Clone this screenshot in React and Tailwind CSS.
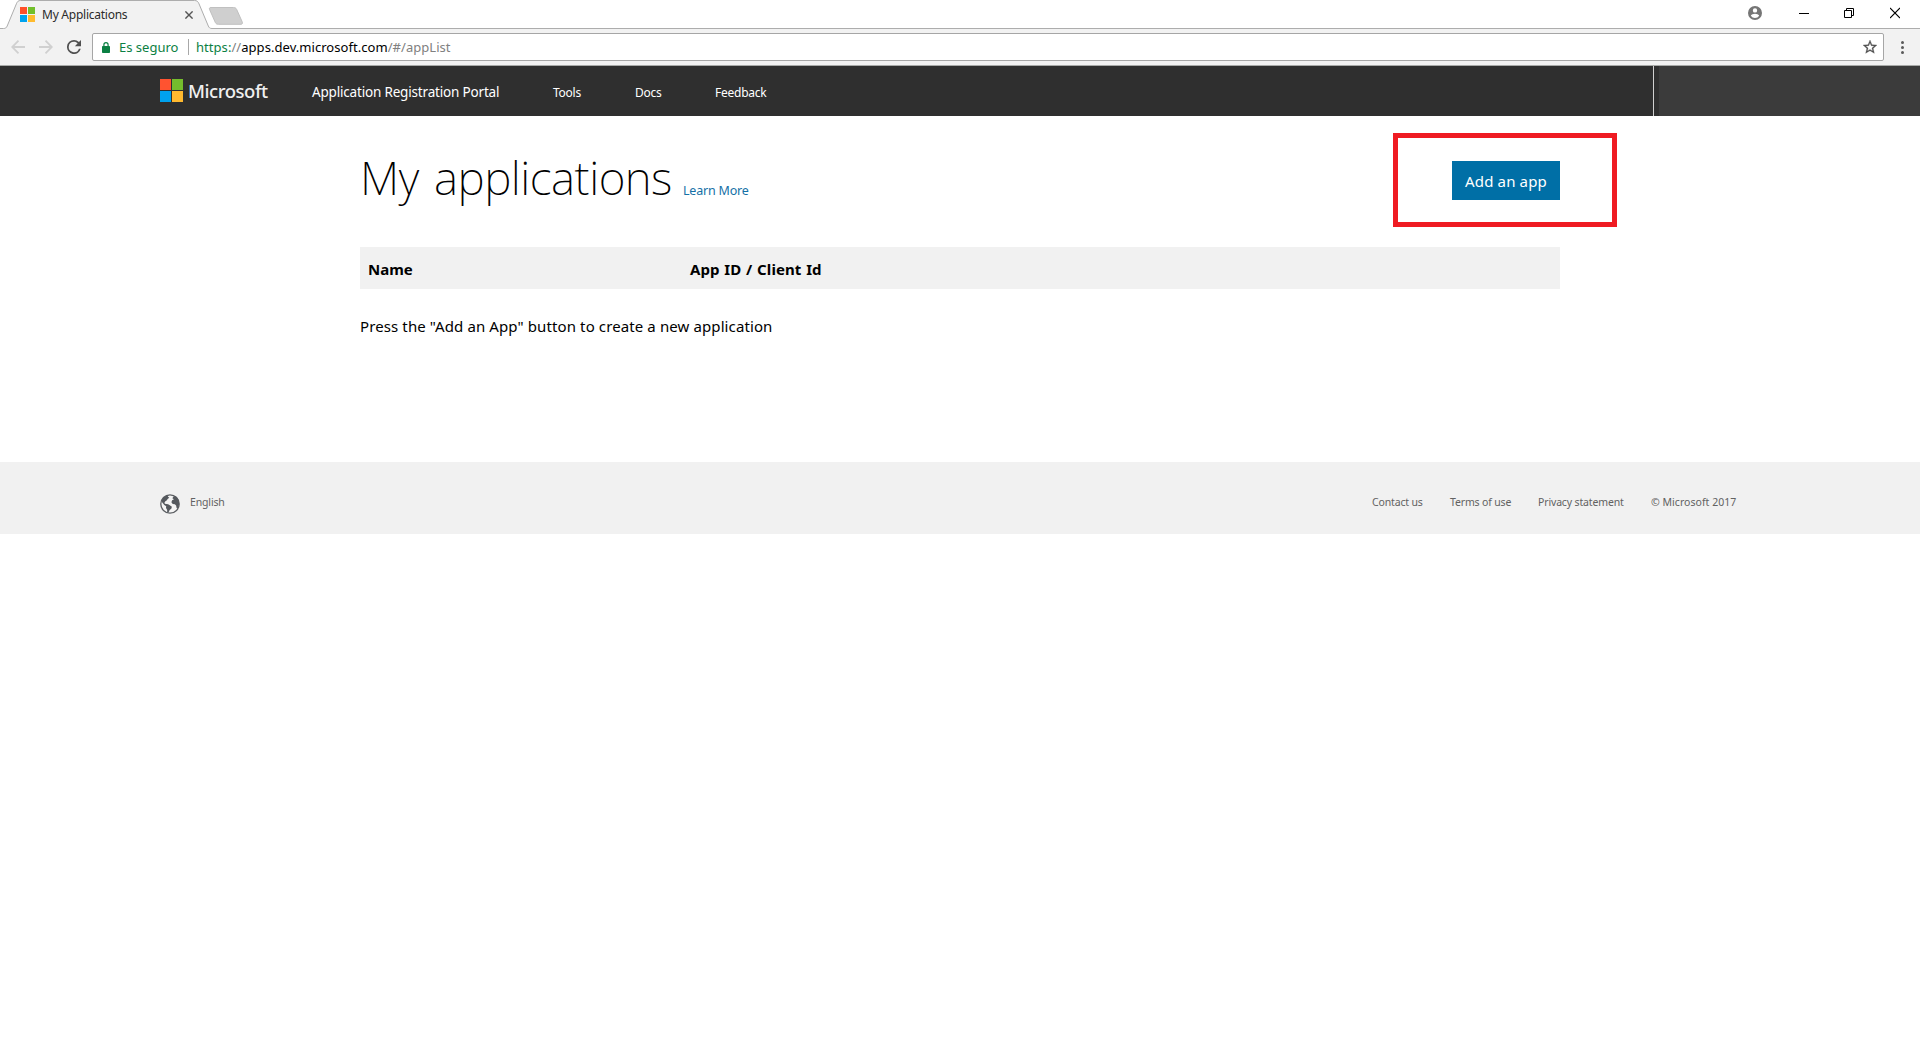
import React from 'react';

function TabFavicon() {
  return (
    <div className="grid h-[15px] w-[15px] shrink-0 grid-cols-[7px_7px] grid-rows-[7px_7px] gap-px">
      <span className="bg-[#ff5029]" />
      <span className="bg-[#72bf2b]" />
      <span className="bg-[#00a3ee]" />
      <span className="bg-[#ffbb2e]" />
    </div>
  );
}

function MicrosoftMark() {
  return (
    <div className="-mt-px mb-px grid h-[23px] w-[23px] shrink-0 grid-cols-[11px_11px] grid-rows-[11px_11px] gap-px">
      <span className="bg-[#ff5330]" />
      <span className="bg-[#75bd2d]" />
      <span className="bg-[#00a2ee]" />
      <span className="bg-[#ffb92f]" />
    </div>
  );
}

function TabStrip() {
  return (
    <div className="relative flex h-[29px] bg-white">
      <svg className="absolute inset-0" width="260" height="29" viewBox="0 0 260 29" fill="none">
        <path d="M0 29V28.5H3.5C5.5 28.5 6.4 27.8 7.2 26L16.4 3.8C17.4 1.4 18.4.5 20.5.5H194.5C196.8.5 198 1.4 199 3.8L208.3 26C209.1 27.8 210 28.5 212 28.5H260V29Z" fill="#f2f2f2" />
        <path d="M0 28.5H3.5C5.5 28.5 6.4 27.8 7.2 26L16.4 3.8C17.4 1.4 18.4.5 20.5.5H194.5C196.8.5 198 1.4 199 3.8L208.3 26C209.1 27.8 210 28.5 212 28.5H260" stroke="#adadad" />
        <path d="M211 7.5H233.5C235 7.5 236 8 236.6 9.3L242.2 21.8C242.8 23.3 242.4 24.3 241 24.3H218.3C216.8 24.3 215.9 23.7 215.3 22.4L209.7 9.8C209 8.3 209.4 7.5 211 7.5Z" fill="#cfcfcf" stroke="#c0c0c0" />
      </svg>
      <div className="relative flex h-[29px] w-[214px] items-center pl-5">
        <TabFavicon />
        <span className="ml-[7px] flex-1 text-[12px] leading-[29px] tracking-[-0.25px] text-[#2b2b2b]">My Applications</span>
        <svg className="mr-[21px]" width="8" height="8" viewBox="0 0 8 8" stroke="#555" strokeWidth="1.4">
          <path d="M.4.4 7.6 7.6M7.6.4.4 7.6" />
        </svg>
      </div>
      <div className="ml-[46px] flex-1 border-b border-[#adadad]" />
      <div className="absolute top-[6px] right-[20px] flex items-center">
        <svg width="14" height="14" viewBox="2 2 20 20" fill="#757575">
          <path d="M12 2a10 10 0 1 0 0 20 10 10 0 0 0 0-20Zm0 3.2a3.1 3.1 0 1 1 0 6.2 3.1 3.1 0 0 1 0-6.2Zm0 14a7.200 7.200 0 0 1-6-3.220c.03-1.990 4-3.080 6-3.080s5.970 1.090 6 3.080a7.200 7.200 0 0 1-6 3.220Z" />
        </svg>
        <svg className="ml-[37px]" width="10" height="14" viewBox="0 0 10 14"><path d="M0 7.5H10" stroke="#000" /></svg>
        <svg className="ml-[35px]" width="10" height="14" viewBox="0 0 10 14" fill="none" stroke="#000">
          <path d="M.5 4.500H7.500V11.500H.5ZM2.500 4.500V2.500H9.500V9.500H7.500" />
        </svg>
        <svg className="ml-[36px]" width="10" height="14" viewBox="0 0 10 14" stroke="#000" strokeWidth="1.100">
          <path d="M0 2 10 12M10 2 0 12" />
        </svg>
      </div>
    </div>
  );
}

function Toolbar() {
  return (
    <div className="flex h-[37px] items-center border-b border-[#a8aaa8] bg-[#f2f2f2] pl-[11px]">
      <svg width="14" height="14" viewBox="0 0 14 14" fill="none" stroke="#d0d0d0" strokeWidth="1.8">
        <path d="M14 7H1.500M7.500.700 1.200 7l6.300 6.300" />
      </svg>
      <svg className="ml-[14px]" width="14" height="14" viewBox="0 0 14 14" fill="none" stroke="#d0d0d0" strokeWidth="1.8">
        <path d="M0 7H12.500M6.500.700 12.800 7l-6.300 6.300" />
      </svg>
      <svg className="ml-[14px]" width="14" height="14" viewBox="4 4 16 16" fill="#505050">
        <path d="M17.650 6.350A7.960 7.960 0 0 0 12 4a8 8 0 1 0 7.730 10h-2.080A6 6 0 1 1 12 6c1.660 0 3.140.690 4.220 1.780L13 11h7V4l-2.350 2.350Z" />
      </svg>
      <div className="ml-[11px] flex h-7 w-[1792px] items-center rounded-[2px] border border-[#a6a6a6] bg-white pl-[9px] text-[13px] leading-[26px]">
        <svg width="8" height="11" viewBox="0 0 8 11" fill="#0b8043">
          <path d="M1.300 4V2.700a2.700 2.700 0 0 1 5.400 0V4H7.200a.8.8 0 0 1 .8.8v5.400a.8.8 0 0 1-.8.8H.8a.8.8 0 0 1-.8-.8V4.800A.8.8 0 0 1 .8 4Zm1.200 0h3V2.700a1.500 1.500 0 0 0-3 0Z" />
        </svg>
        <span className="ml-[9px] w-[69px] text-[#0b8043]">Es seguro</span>
        <span className="h-4 w-px bg-[#a8a8a8]" />
        <span className="ml-[7px] flex-1 tracking-[0.05px] text-black">
          <span className="text-[#0b8043]">https:</span>
          <span className="text-[#808080]">//</span>
          apps.dev.microsoft.com
          <span className="text-[#808080]">/#/appList</span>
        </span>
        <svg className="mr-[6px]" width="14" height="14" viewBox="2 2 20 20" fill="#505050" stroke="#505050" strokeWidth="0.4">
          <path d="m22 9.240-7.190-.620L12 2 9.190 8.630 2 9.240l5.460 4.730L5.820 21 12 17.270 18.180 21l-1.630-7.030L22 9.240ZM12 15.400l-3.760 2.270 1-4.280-3.320-2.880 4.380-.380L12 6.100l1.710 4.040 4.380.380-3.320 2.880 1 4.280L12 15.400Z" />
        </svg>
      </div>
      <div className="ml-[17px] flex flex-col gap-[2px]">
        <span className="h-[3px] w-[3px] rounded-full bg-[#5a5a5a]" />
        <span className="h-[3px] w-[3px] rounded-full bg-[#5a5a5a]" />
        <span className="h-[3px] w-[3px] rounded-full bg-[#5a5a5a]" />
      </div>
    </div>
  );
}

function PortalNav() {
  return (
    <nav className="flex h-[50px] bg-[#2f2f2f] text-white">
      <div className="flex w-[1653px] items-center pl-40">
        <MicrosoftMark />
        <span className="-mt-px ml-[5px] w-[124px] text-[18.5px] leading-[48px] font-medium tracking-[-0.45px] text-[#f0f0f0]">Microsoft</span>
        <span className="mt-[2px] w-[240px] text-[13.5px] tracking-[-0.18px]">Application Registration Portal</span>
        <div className="mt-[3px] flex text-[12px] tracking-[-0.25px]">
          <span className="w-[83px] pl-px">Tools</span>
          <span className="w-[80px]">Docs</span>
          <span>Feedback</span>
        </div>
      </div>
      <div className="w-px bg-[#d0d0d0]" />
      <div className="w-[5px]" />
      <div className="flex-1 bg-[#3b3b3b]" />
    </nav>
  );
}

function ApplicationList() {
  return (
    <main className="mx-auto h-[346px] w-[1200px]">
      <div className="relative flex h-[131px] items-start">
        <h1 className="mt-[30px] w-[315px] text-[46px] leading-[62px] font-[220] tracking-[-0.5px] whitespace-nowrap text-black [word-spacing:4px]">My applications</h1>
        <a className="mt-[64px] ml-[8px] text-[12.5px] leading-[22px] tracking-[-0.2px] text-[#1570a6]">Learn More</a>
        <button className="mt-[45px] ml-auto h-[39px] w-[108px] bg-[#006fa6] pt-px text-[15px] leading-[38px] tracking-[0.15px] text-white">Add an app</button>
        <div className="absolute top-[17px] -right-[57px] h-[94px] w-[224px] border-[5px] border-[#ef1b22]" />
      </div>
      <div className="flex h-[42px] bg-[#f1f1f1] pl-2 text-[15px] leading-[44px] font-bold text-black">
        <span className="w-[322px]">Name</span>
        <span className="tracking-[0.1px] [word-spacing:0.7px]">App ID / Client Id</span>
      </div>
      <p className="mt-[25px] text-[15px] leading-6 tracking-[0.11px] text-black">Press the "Add an App" button to create a new application</p>
    </main>
  );
}

function Globe() {
  return (
    <svg width="20" height="20" viewBox="0 0 20 20">
      <circle cx="10" cy="10" r="9.200" fill="#f4f4f4" stroke="#5c5f63" strokeWidth="1.300" />
      <path d="M2.200 5.200C3.800 2.900 6 1.600 8.600 1.100L7.800 2.500l1.500 1.200L7.600 5 6.900 6.300 5.400 7.300 4.500 8.400l.3 1.300 1.500.3 1.800.3 1.700.9 2.100 1.600-.6 2-1.700 1.300-.6 1.400-1 1.200-.9-.3.1-2.500-1.200-1.800.2-1.800L4.300 11 2.900 9.300 1.700 7.800Z" fill="#55595e" />
      <path d="M12.300 4.200 13.500 2.500l1.500-.4c1.800 1 3 2.600 3.700 4.700.8 2.600.4 5-.9 7.300l-1.200-.2-.5-2.300-1.300-1.300-2.100-.3-1.300-1.700.7-2 1.700-.8-.6-.8Z" fill="#55595e" />
    </svg>
  );
}

function PortalFooter() {
  return (
    <footer className="flex h-[72px] items-center bg-[#f1f1f1] pr-[183px] pl-40 text-[10.5px] tracking-[-0.15px] text-[#626262]">
      <div className="mt-[12px]"><Globe /></div>
      <span className="mt-[10px] ml-[10px] flex-1">English</span>
      <div className="mt-[10px] flex">
        <span className="w-[78px]">Contact us</span>
        <span className="w-[88px]">Terms of use</span>
        <span className="w-[113px]">Privacy statement</span>
        <span className="w-[86px] tracking-[0.04px]">© Microsoft 2017</span>
      </div>
    </footer>
  );
}

export default function App() {
  return (
    <div className="min-h-screen bg-white font-['Noto_Sans',sans-serif]">
      <TabStrip />
      <Toolbar />
      <PortalNav />
      <ApplicationList />
      <PortalFooter />
    </div>
  );
}
